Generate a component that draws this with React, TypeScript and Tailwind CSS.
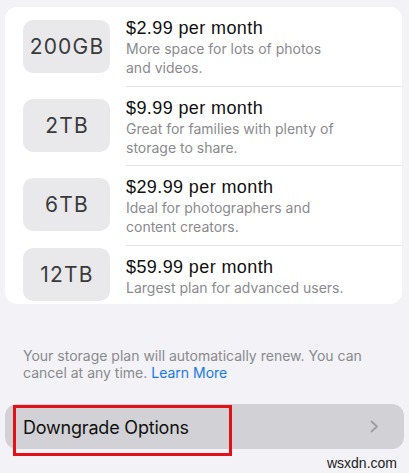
import React from "react";

type Plan = { size: string; price: string; desc: string[]; rowH: string; boxMt: string; first?: boolean };

const plans: Plan[] = [
  { size: "200GB", price: "$2.99 per month", desc: ["More space for lots of photos", "and videos."], rowH: "h-[79px]", boxMt: "mt-[13px]", first: true },
  { size: "2TB", price: "$9.99 per month", desc: ["Great for families with plenty of", "storage to share."], rowH: "h-[79px]", boxMt: "mt-[13px]" },
  { size: "6TB", price: "$29.99 per month", desc: ["Ideal for photographers and", "content creators."], rowH: "h-[80px]", boxMt: "mt-[13px]" },
  { size: "12TB", price: "$59.99 per month", desc: ["Largest plan for advanced users."], rowH: "h-[59px]", boxMt: "mt-[3px]" },
];

export default function App() {
  return (
    <div
      className="relative w-[409px] h-[473px] overflow-hidden bg-[#f2f2f7]"
      style={{ fontFamily: "Inter, 'Liberation Sans', sans-serif" }}
    >
      <div className="pt-[7px] px-[5px]">
        <div className="w-[397px] bg-white rounded-[12px] overflow-hidden">
          {plans.map((p) => (
            <div key={p.size} className={`flex ${p.rowH}`}>
              <div
                className={`ml-[18px] ${p.boxMt} w-[87px] h-[53px] shrink-0 rounded-[10px] bg-[#e9e9eb] flex items-center justify-center pl-[1px] text-[21px] text-[#3a3a3c] tracking-[1.2px]`}
              >
                {p.size}
              </div>
              <div
                className={`ml-[16px] flex-1 pt-[10px] ${p.first ? "" : "border-t border-[#e3e3e6]"}`}
              >
                <div
                  className="text-[18px] leading-[22px] text-[#111] tracking-[0.4px]"
                  style={{ fontFamily: "'Liberation Sans', Arial, sans-serif" }}
                >
                  {p.price}
                </div>
                <div className="text-[14px] leading-[19px] text-[#8a8a8e]">
                  {p.desc.map((d, i) => (
                    <div key={i}>{d}</div>
                  ))}
                </div>
              </div>
            </div>
          ))}
        </div>
      </div>

      <div className="mt-[43px] pl-[23px] text-[14px] leading-[17px] text-[#8a8a8e]">
        Your storage plan will automatically renew. You can
        <br />
        cancel at any time. <span className="text-[#1a78e6]">Learn More</span>
      </div>

      <div className="mt-[23px] mx-[5px] h-[45px] rounded-[12px] bg-[#d1d1d6] flex items-center justify-between pl-[18px] pr-[25px]">
        <span className="text-[18px] text-[#111] tracking-[-0.2px] pt-[2px]">Downgrade Options</span>
        <svg width="9" height="13" viewBox="0 0 9 13" fill="none">
          <path d="M1.5 1.5 L7 6.5 L1.5 11.5" stroke="#9c9ca1" strokeWidth="1.8" strokeLinecap="round" strokeLinejoin="round" />
        </svg>
      </div>

      <div className="absolute left-[13px] top-[405px] w-[219px] h-[51px] border-[3px] border-[#e3101a]" />

      <div
        className="absolute right-[12px] top-[455px] text-[14px] leading-[17px] text-[#222]"
        style={{ fontFamily: "'Liberation Sans', Arial, sans-serif" }}
      >
        wsxdn.com
      </div>
    </div>
  );
}
